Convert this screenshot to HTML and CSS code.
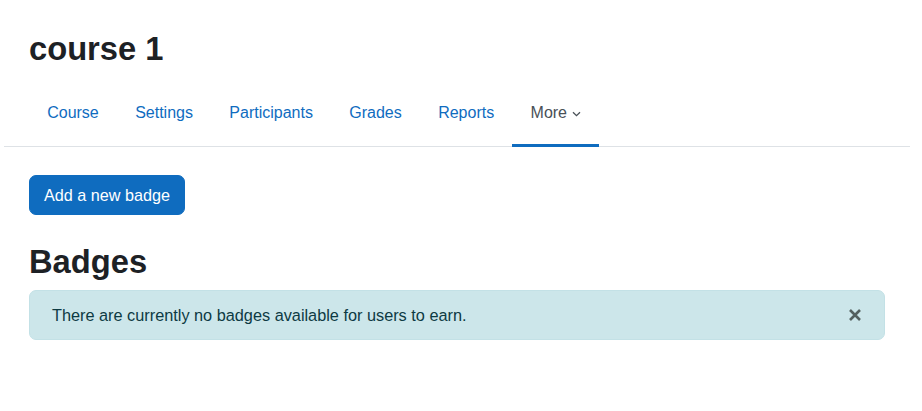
FILE: index.html
```html
<!DOCTYPE html>
<html lang="en">
<head>
    <meta charset="UTF-8">
    <meta name="viewport" content="width=device-width, initial-scale=1.0">
    <title>course 1: Badges</title>
    <link rel="stylesheet" href="styles.css">
</head>
<body>
    <div class="page">
        <header class="page-header">
            <h1>course 1</h1>
        </header>

        <nav class="secondary-nav">
            <ul>
                <li><a href="#" class="nav-link">Course</a></li>
                <li><a href="#" class="nav-link">Settings</a></li>
                <li><a href="#" class="nav-link">Participants</a></li>
                <li><a href="#" class="nav-link">Grades</a></li>
                <li><a href="#" class="nav-link">Reports</a></li>
                <li>
                    <a href="#" class="nav-link active">More
                        <svg class="caret" width="9" height="6" viewBox="0 0 9 6" aria-hidden="true">
                            <path d="M1 1.2 L4.5 4.6 L8 1.2" fill="none" stroke="currentColor" stroke-width="1.3"/>
                        </svg>
                    </a>
                </li>
            </ul>
        </nav>

        <main class="content">
            <button type="button" class="btn-primary">Add a new badge</button>

            <h2>Badges</h2>

            <div class="alert">
                <span>There are currently no badges available for users to earn.</span>
                <button type="button" class="close" aria-label="Dismiss this notification">
                    <svg width="14" height="14" viewBox="0 0 14 14" aria-hidden="true">
                        <path d="M2 2 L12 12 M12 2 L2 12" fill="none" stroke="currentColor" stroke-width="2.6"/>
                    </svg>
                </button>
            </div>
        </main>
    </div>
</body>
</html>
```

FILE: styles.css
```css
body {
    margin: 0;
    font-family: "Liberation Sans", Arial, sans-serif;
    font-size: 16.3px;
    line-height: 24px;
    color: #1d2125;
    background: #fff;
}
.page {
    margin: 0 12px 0 4px;
}
.page-header {
    padding: 30px 25px 0;
}
h1 {
    margin: 0;
    font-size: 32.7px;
    line-height: 38px;
    font-weight: bold;
}
.secondary-nav {
    margin-top: 17px;
    border-bottom: 1px solid #dee2e6;
}
.secondary-nav ul {
    display: flex;
    list-style: none;
    margin: 0 0 -1px;
    padding: 0 0 0 25px;
}
.nav-link {
    display: flex;
    align-items: center;
    padding: 16px 18.2px 19px;
    border-bottom: 3px solid transparent;
    color: #0f6cbf;
    text-decoration: none;
    font-size: 16px;
    line-height: 24px;
}
.nav-link.active {
    color: #495057;
    border-bottom-color: #0f6cbf;
}
.caret {
    margin-left: 5px;
    margin-top: 2px;
}
.content {
    padding: 28px 25px 0;
}
.btn-primary {
    display: block;
    padding: 7px 14px;
    border: 1px solid #0f6cbf;
    border-radius: 7px;
    background-color: #0f6cbf;
    color: #fff;
    font-family: inherit;
    font-size: 16.2px;
    line-height: 24px;
}
h2 {
    margin: 28px 0 9px;
    font-size: 32.7px;
    line-height: 38px;
    font-weight: bold;
}
.alert {
    display: flex;
    align-items: center;
    justify-content: space-between;
    padding: 12px 22px;
    border: 1px solid #c3e1e6;
    border-radius: 7px;
    background-color: #cce6ea;
    color: #0d3a43;
}
.close {
    display: flex;
    padding: 0;
    border: none;
    background: none;
    color: #53605f;
}
```
